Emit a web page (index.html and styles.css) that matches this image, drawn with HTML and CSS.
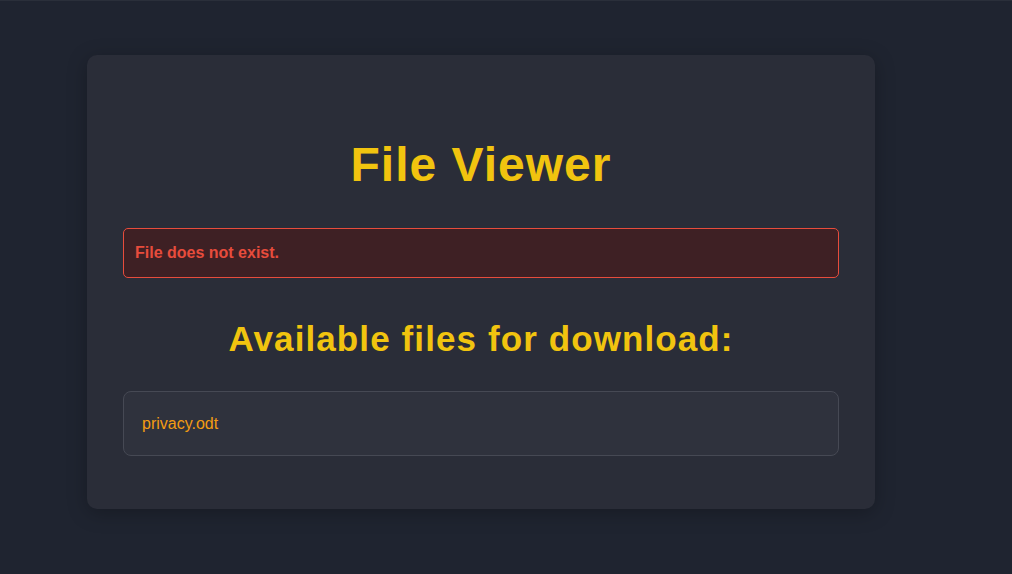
FILE: index.html
```html
<!DOCTYPE html>
<html lang="en">
<head>
<meta charset="utf-8">
<title>File Viewer</title>
<link rel="stylesheet" href="styles.css">
</head>
<body>
  <main class="card">
    <h1 class="title">File Viewer</h1>
    <div class="alert">File does not exist.</div>
    <h2 class="subtitle">Available files for download:</h2>
    <ul class="file-list">
      <li class="file-item"><a class="file-link" href="#">privacy.odt</a></li>
    </ul>
  </main>
</body>
</html>
```

FILE: styles.css
```css
html, body {
  margin: 0;
  padding: 0;
}
body {
  background: #1f2430;
  border-top: 1px solid #2a2f3a;
  min-height: 573px;
  font-family: "Liberation Sans", Arial, sans-serif;
  padding: 54px 0 0 87px;
  box-sizing: border-box;
}
.card {
  width: 788px;
  box-sizing: border-box;
  background: #2a2d38;
  border-radius: 10px;
  box-shadow: 0 4px 20px rgba(0, 0, 0, 0.25);
  padding: 80px 36px 53px 36px;
}
.title {
  margin: 0 0 33px;
  text-align: center;
  color: #f1c40f;
  font-size: 48px;
  line-height: 60px;
  font-weight: bold;
  letter-spacing: 1px;
}
.alert {
  height: 50px;
  box-sizing: border-box;
  display: flex;
  align-items: center;
  padding: 0 11px;
  background: #3e2024;
  border: 1px solid #e74c3c;
  border-radius: 5px;
  color: #e74c3c;
  font-size: 16px;
  font-weight: bold;
}
.subtitle {
  margin: 38px 0 29px;
  text-align: center;
  color: #f1c40f;
  font-size: 35px;
  line-height: 46px;
  font-weight: bold;
  letter-spacing: 1.1px;
}
.file-list {
  list-style: none;
  margin: 0;
  padding: 0;
}
.file-item {
  height: 65px;
  box-sizing: border-box;
  display: flex;
  align-items: center;
  padding: 0 18px;
  background: #2f323d;
  border: 1px solid #464954;
  border-radius: 8px;
}
.file-link {
  color: #f39c12;
  text-decoration: none;
  font-size: 16px;
}
```
